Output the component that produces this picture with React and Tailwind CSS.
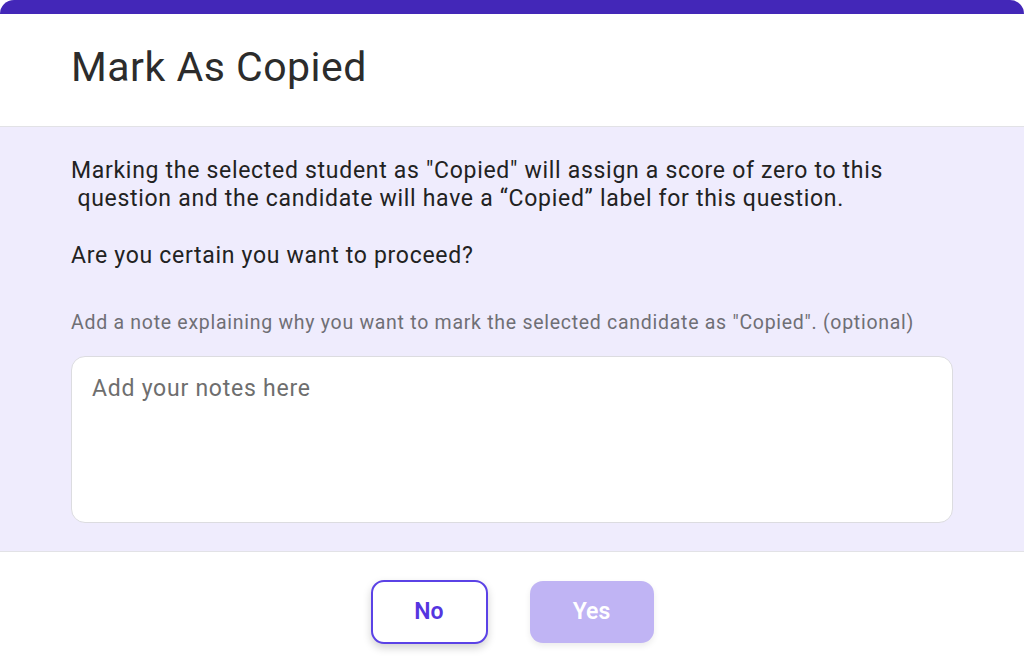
import React from "react";

const MarkAsCopiedModal = () => {
  return (
    <div className="w-[1024px] h-[672px] bg-white overflow-hidden font-['Roboto',sans-serif]">
      {/* Top accent bar */}
      <div className="h-[14px] bg-[#4327b8] rounded-t-[14px]" />

      {/* Header */}
      <div className="h-[113px] flex items-center px-[71px] border-b border-[#e2e2e6]">
        <h1 className="text-[41px] text-[#2c2c2c] leading-none tracking-[0.5px] mt-[-6px]">
          Mark As Copied
        </h1>
      </div>

      {/* Body */}
      <div className="bg-[#efecfd] px-[71px] pt-[30px] pb-[28px] border-b border-[#e2e2e6]">
        <p className="text-[23px] leading-[28px] tracking-[0.7px] text-[#222]">
          Marking the selected student as "Copied" will assign a score of zero to this
          <br />
          &nbsp;question and the candidate will have a “Copied” label for this question.
        </p>
        <p className="text-[23px] leading-[28px] tracking-[0.7px] text-[#222] mt-[29px]">
          Are you certain you want to proceed?
        </p>
        <p className="text-[19.5px] leading-[24px] tracking-[0.72px] text-[#6f6f75] mt-[41px]">
          Add a note explaining why you want to mark the selected candidate as "Copied". (optional)
        </p>
        <textarea
          placeholder="Add your notes here"
          className="mt-[21px] w-[882px] h-[167px] bg-white border border-[#dcdce0] rounded-[14px] px-[20px] py-[18px] text-[23px] leading-[28px] tracking-[0.75px] text-[#333] placeholder:text-[#6e6e6e] resize-none outline-none block"
        />
      </div>

      {/* Footer */}
      <div className="flex justify-center gap-[42px] pt-[28px]">
        <button className="w-[117px] h-[64px] rounded-[13px] border-2 border-[#5b42e6] bg-white text-[#5535e0] text-[23px] font-semibold shadow-[0_4px_8px_rgba(0,0,0,0.18)]">
          No
        </button>
        <button className="w-[124px] h-[62px] mt-[1px] rounded-[13px] bg-[#c0b4f4] text-white text-[23px] font-semibold shadow-[0_3px_6px_rgba(0,0,0,0.08)]">
          Yes
        </button>
      </div>
    </div>
  );
};

export default MarkAsCopiedModal;
